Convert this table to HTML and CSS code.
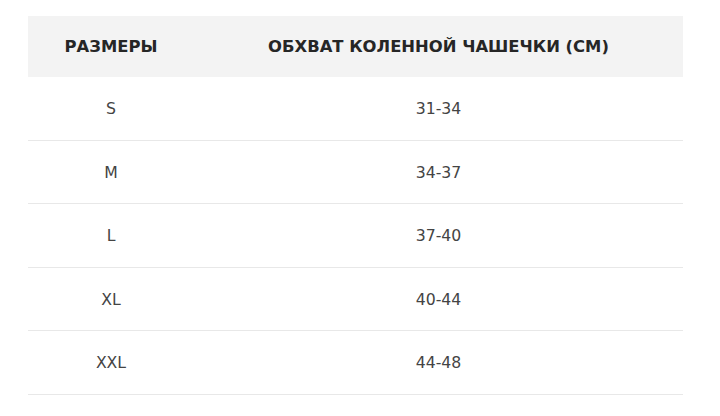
FILE: index.html
```html
<!DOCTYPE html>
<html lang="ru">
<head>
<meta charset="utf-8">
<link rel="stylesheet" href="styles.css">
</head>
<body>
<div class="size-table">
  <div class="row head">
    <div class="cell">РАЗМЕРЫ</div>
    <div class="cell">ОБХВАТ КОЛЕННОЙ ЧАШЕЧКИ (СМ)</div>
  </div>
  <div class="row">
    <div class="cell">S</div>
    <div class="cell">31-34</div>
  </div>
  <div class="row">
    <div class="cell">M</div>
    <div class="cell">34-37</div>
  </div>
  <div class="row">
    <div class="cell">L</div>
    <div class="cell">37-40</div>
  </div>
  <div class="row">
    <div class="cell">XL</div>
    <div class="cell">40-44</div>
  </div>
  <div class="row">
    <div class="cell">XXL</div>
    <div class="cell">44-48</div>
  </div>
</div>
</body>
</html>
```
FILE: styles.css
```css
html, body {
  margin: 0;
  padding: 0;
  background: #ffffff;
}
body {
  font-family: "DejaVu Sans", "Liberation Sans", sans-serif;
}
.size-table {
  width: 655px;
  margin: 15.5px 0 0 28px;
  display: flex;
  flex-direction: column;
}
.row {
  display: grid;
  grid-template-columns: 166px 1fr;
  height: 62.5px;
  border-bottom: 1px solid #e8e8e8;
  color: #444444;
  font-size: 15.7px;
  font-weight: 400;
}
.row.head {
  height: 61.5px;
  border-bottom: none;
  background: #f3f3f3;
  color: #262626;
  font-size: 16.4px;
  font-weight: 700;
}
.cell {
  display: flex;
  align-items: center;
  justify-content: center;
  white-space: nowrap;
  padding-top: 1px;
}
```
